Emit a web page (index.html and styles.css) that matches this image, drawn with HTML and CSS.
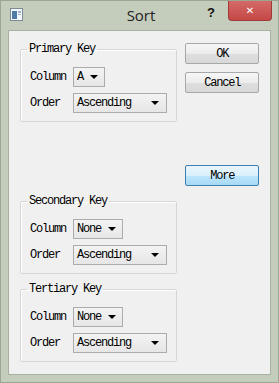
FILE: index.html
```html
<!DOCTYPE html>
<html lang="en">
<head>
  <meta charset="UTF-8">
  <title>Sort</title>
  <link rel="stylesheet" href="styles.css">
</head>
<body>
  <div class="window">
    <div class="titlebar">
      <div class="title-left">
        <svg class="app-icon" width="13" height="13" viewBox="0 0 13 13">
          <rect x="0.5" y="0.5" width="12" height="12" fill="#f4f7fb" stroke="#7d8a99"/>
          <rect x="2" y="3" width="5" height="8" fill="#4e7aa8"/>
          <rect x="8" y="3" width="3" height="2" fill="#9fb3c8"/>
          <rect x="8" y="6" width="3" height="1" fill="#9fb3c8"/>
        </svg>
      </div>
      <div class="title">Sort</div>
      <div class="title-right">
        <span class="help">?</span>
        <span class="close-btn">&#x2715;</span>
      </div>
    </div>

    <div class="client">
      <div class="keys">
        <fieldset class="group">
          <legend>Primary Key</legend>
          <div class="row">
            <span>Column</span>
            <div class="combo col-a">A<i class="arrow"></i></div>
          </div>
          <div class="row">
            <span>Order</span>
            <div class="combo order">Ascending<i class="arrow"></i></div>
          </div>
        </fieldset>

        <div class="spacer"></div>

        <fieldset class="group">
          <legend>Secondary Key</legend>
          <div class="row">
            <span>Column</span>
            <div class="combo col-none">None<i class="arrow"></i></div>
          </div>
          <div class="row">
            <span>Order</span>
            <div class="combo order">Ascending<i class="arrow"></i></div>
          </div>
        </fieldset>

        <fieldset class="group">
          <legend>Tertiary Key</legend>
          <div class="row">
            <span>Column</span>
            <div class="combo col-none">None<i class="arrow"></i></div>
          </div>
          <div class="row">
            <span>Order</span>
            <div class="combo order">Ascending<i class="arrow"></i></div>
          </div>
        </fieldset>
      </div>

      <div class="buttons">
        <button class="btn">OK</button>
        <button class="btn">Cancel</button>
        <button class="btn btn-more">More</button>
      </div>
    </div>
  </div>
</body>
</html>
```

FILE: styles.css
```css
* {
  margin: 0;
  padding: 0;
  box-sizing: border-box;
}

body {
  background-color: #c4ccbb;
  font-family: 'Liberation Mono', 'Courier New', monospace;
  font-size: 12px;
  letter-spacing: -1.2px;
  color: #000;
}

.window {
  width: 279px;
  height: 383px;
  background: #c4ccbb;
  border: 1px solid #9aa592;
  display: flex;
  flex-direction: column;
}

/* Title bar */
.titlebar {
  height: 29px;
  display: grid;
  grid-template-columns: 1fr auto 1fr;
  align-items: start;
  padding: 0 6px 0 9px;
}

.title-left {
  padding-top: 7px;
}

.app-icon {
  display: block;
}

.title {
  font-family: 'Open Sans', sans-serif;
  font-size: 15px;
  letter-spacing: 0;
  color: #1e1e1e;
  padding-top: 4px;
}

.title-right {
  display: flex;
  justify-content: flex-end;
  align-items: flex-start;
}

.help {
  font-family: 'Liberation Sans', sans-serif;
  font-weight: bold;
  font-size: 13px;
  letter-spacing: 0;
  color: #111;
  margin: 4px 13px 0 0;
}

.close-btn {
  width: 44px;
  height: 20px;
  background: linear-gradient(#d46a68, #c44846);
  border: 1px solid #9e3b3a;
  border-top: none;
  border-radius: 0 0 4px 4px;
  color: #fff;
  font-family: 'DejaVu Sans', sans-serif;
  font-weight: bold;
  font-size: 10px;
  letter-spacing: 0;
  display: flex;
  align-items: center;
  justify-content: center;
}

/* Client area */
.client {
  margin: 0 7px 7px 7px;
  height: 345px;
  background: #f0f0f0;
  border: 1px solid #a9b2a2;
  display: flex;
  gap: 8px;
  padding: 12px 11px 12px 11px;
}

.keys {
  width: 158px;
  display: flex;
  flex-direction: column;
}

.spacer {
  flex: 1;
}

.group {
  border: 1px solid #d5d5d5;
  border-radius: 2px;
  box-shadow: inset 1px 1px 0 #fff;
  padding: 12px 9px 8px 9px;
  display: flex;
  flex-direction: column;
  gap: 6px;
  min-width: 0;
}

.group + .group {
  margin-top: 9px;
}

.group legend {
  line-height: 12px;
  margin-left: -3px;
  padding: 0 2px;
}

.row {
  display: grid;
  grid-template-columns: 43px auto;
  align-items: center;
}

.row .combo {
  justify-self: start;
}

.combo {
  height: 20px;
  border: 1px solid #acacac;
  background: linear-gradient(#f3f3f3, #e6e6e6);
  display: flex;
  align-items: center;
  justify-content: space-between;
  padding: 0 6px 0 3px;
}

.col-a { width: 32px; }
.col-none { width: 50px; }
.order { width: 94px; padding-right: 7px; }

.arrow {
  width: 0;
  height: 0;
  border-left: 4px solid transparent;
  border-right: 4px solid transparent;
  border-top: 4px solid #000;
}

/* Buttons */
.buttons {
  width: 74px;
  display: flex;
  flex-direction: column;
}

.btn {
  height: 21px;
  font-family: 'Liberation Mono', 'Courier New', monospace;
  font-size: 12px;
  letter-spacing: -1.2px;
  color: #000;
  border: 1px solid #a8a8a8;
  border-radius: 2px;
  background: linear-gradient(#f6f6f6 0%, #ececec 50%, #dedede 51%, #d8d8d8 100%);
  margin-bottom: 8px;
}

.btn-more {
  margin-top: 64px;
  border-color: #3c7fb1;
  background: linear-gradient(#eaf6fd 0%, #d9f0fc 50%, #bee6fd 51%, #a7d9f5 100%);
}
```
